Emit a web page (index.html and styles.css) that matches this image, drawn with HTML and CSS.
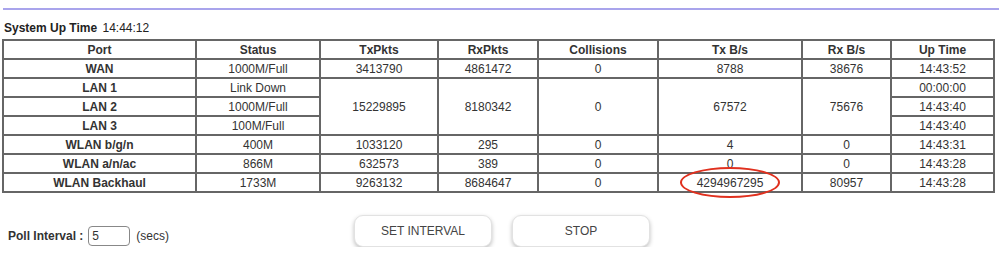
FILE: index.html
```html
<!DOCTYPE html>
<html lang="en">
<head>
    <meta charset="UTF-8">
    <title>Traffic Meter Statistics</title>
    <link rel="stylesheet" href="styles.css">
</head>
<body>

<div class="topline"></div>

<div class="uptime"><b>System Up Time</b> <span class="time">14:44:12</span></div>

<table class="stats">
    <thead>
        <tr>
            <th class="c-port">Port</th>
            <th class="c-status">Status</th>
            <th class="c-tx">TxPkts</th>
            <th class="c-rx">RxPkts</th>
            <th class="c-col">Collisions</th>
            <th class="c-txb">Tx B/s</th>
            <th class="c-rxb">Rx B/s</th>
            <th>Up Time</th>
        </tr>
    </thead>
    <tbody>
        <tr>
            <th>WAN</th><td>1000M/Full</td><td>3413790</td><td>4861472</td><td>0</td><td>8788</td><td>38676</td><td>14:43:52</td>
        </tr>
        <tr>
            <th>LAN 1</th><td>Link Down</td>
            <td rowspan="3">15229895</td><td rowspan="3">8180342</td><td rowspan="3">0</td><td rowspan="3">67572</td><td rowspan="3">75676</td>
            <td>00:00:00</td>
        </tr>
        <tr>
            <th>LAN 2</th><td>1000M/Full</td><td>14:43:40</td>
        </tr>
        <tr>
            <th>LAN 3</th><td>100M/Full</td><td>14:43:40</td>
        </tr>
        <tr>
            <th>WLAN b/g/n</th><td>400M</td><td>1033120</td><td>295</td><td>0</td><td>4</td><td>0</td><td>14:43:31</td>
        </tr>
        <tr>
            <th>WLAN a/n/ac</th><td>866M</td><td>632573</td><td>389</td><td>0</td><td>0</td><td>0</td><td>14:43:28</td>
        </tr>
        <tr>
            <th>WLAN Backhaul</th><td>1733M</td><td>9263132</td><td>8684647</td><td>0</td><td><span class="circled">4294967295</span></td><td>80957</td><td>14:43:28</td>
        </tr>
    </tbody>
</table>

<div class="controls">
    <div class="poll">
        <b>Poll Interval :</b>
        <input type="text" class="interval" value="5">
        <span>(secs)</span>
    </div>
    <button class="btn btn-set">SET INTERVAL</button>
    <button class="btn btn-stop">STOP</button>
</div>

</body>
</html>
```

FILE: styles.css
```css
body {
    font-family: "Liberation Sans", Arial, sans-serif;
    font-size: 12px;
    color: #333;
    margin: 0;
    background: #fff;
}
.topline {
    height: 2px;
    margin: 8px 0 0 3px;
    background-color: #a9a4ec;
}
.uptime {
    margin: 11px 0 0 4px;
    line-height: 14px;
    color: #222;
}
.uptime .time {
    margin-left: 2px;
}
table.stats {
    width: 993px;
    margin: 4px 0 0 2px;
    border-collapse: collapse;
    border: 2px solid #777;
}
.stats th, .stats td {
    border: 2px solid #666;
    height: 17px;
    padding: 0 4px;
    text-align: center;
    line-height: 14px;
}
.stats th {
    font-weight: bold;
    color: #333;
}
.stats td {
    color: #333;
}
.c-port { width: 183px; }
.c-status { width: 114px; }
.c-tx { width: 108px; }
.c-rx { width: 90px; }
.c-col { width: 110px; }
.c-txb { width: 134px; }
.c-rxb { width: 79px; }
.circled {
    position: relative;
    display: inline-block;
}
/* red ring drawn over the value */
.circled::after {
    content: "";
    position: absolute;
    left: -17px;
    right: -17px;
    top: -9px;
    bottom: -8px;
    border: 2px solid #e0301e;
    border-radius: 50%;
}
.controls {
    display: flex;
    align-items: flex-start;
    margin-top: 22px;
}
.poll {
    width: 346px;
    padding: 11px 0 0 8px;
    display: flex;
    align-items: center;
    color: #333;
}
.interval {
    width: 34px;
    height: 16px;
    margin: 0 6px 0 5px;
    padding: 1px 3px;
    border: 1px solid #888;
    border-radius: 4px;
    font-family: inherit;
    font-size: 12px;
    color: #333;
}
.btn {
    width: 138px;
    height: 32px;
    margin-right: 20px;
    background-color: #fff;
    color: #444;
    border: 1px solid #e2e2e2;
    border-radius: 9px;
    box-shadow: 0 2px 4px rgba(0, 0, 0, 0.25);
    font-family: inherit;
    font-size: 12px;
    cursor: pointer;
}
.btn:hover {
    background-color: #f4f4f4;
}
```
